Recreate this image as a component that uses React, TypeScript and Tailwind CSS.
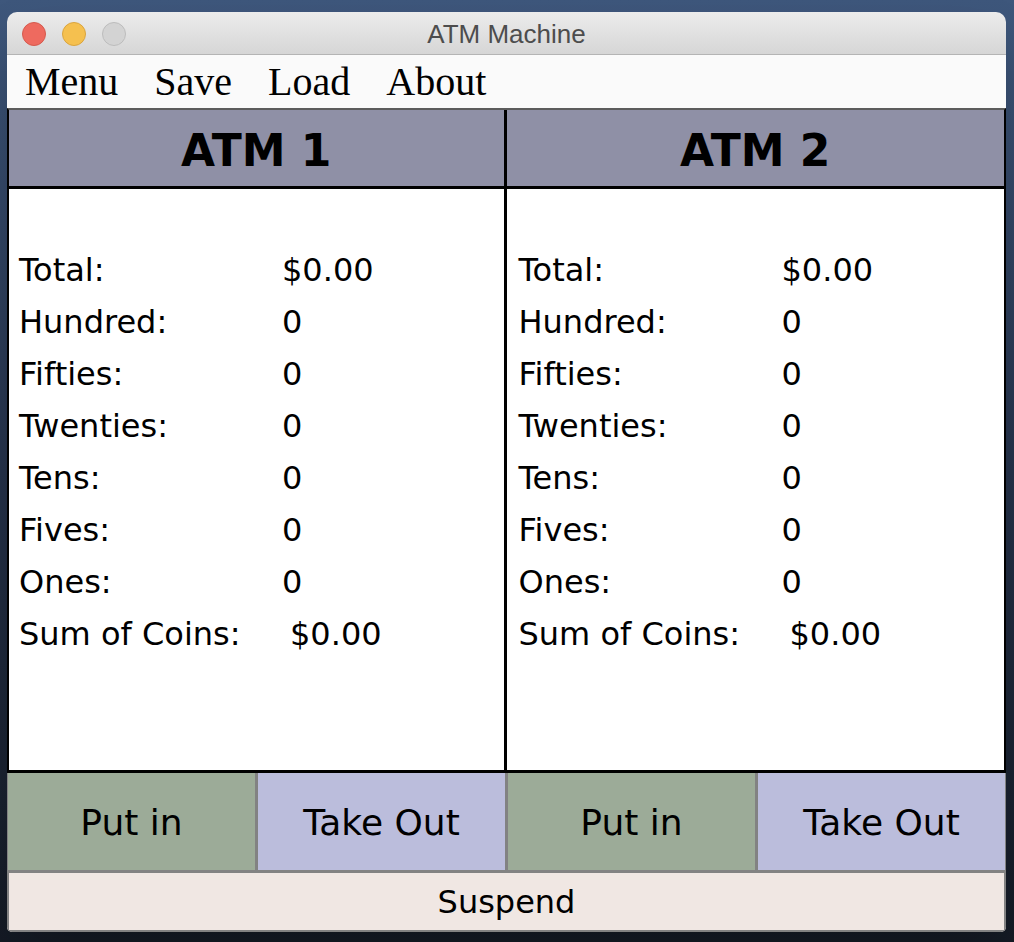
import React from 'react';

const rows: [string, string][] = [
  ['Total:', '$0.00'],
  ['Hundred:', '0'],
  ['Fifties:', '0'],
  ['Twenties:', '0'],
  ['Tens:', '0'],
  ['Fives:', '0'],
  ['Ones:', '0'],
  ['Sum of Coins:', '$0.00'],
];

const comic = "font-['Comic_Sans_MS','DejaVu_Sans',sans-serif]";

function AtmColumn({ title, inset }: { title: string; inset: string }) {
  return (
    <div className="flex flex-col">
      <div className="flex h-[79px] items-center justify-center border-b-[3px] border-black bg-[#8f90a6] pt-[6px]">
        <span className={`${comic} text-[44px] font-bold text-black`}>{title}</span>
      </div>
      <div className={`h-[581px] bg-white pt-[55px] ${inset}`}>
        {rows.map(([label, value]) => (
          <div key={label} className={`${comic} flex h-[52px] items-center text-[32px] text-black`}>
            <span className="w-[263px]">{label}</span>
            <span className={label === 'Sum of Coins:' ? 'pl-[8px]' : ''}>{value}</span>
          </div>
        ))}
      </div>
    </div>
  );
}

export default function App() {
  return (
    <div className="h-[942px] w-[1014px] overflow-hidden bg-gradient-to-b from-[#3e577c] via-[#25324a] to-[#141a24] pl-[7px] pt-[12px]">
      <div className="flex h-[920px] w-[999px] flex-col overflow-hidden rounded-t-[10px] rounded-b-[5px] shadow-2xl">
        {/* Title bar */}
        <div className="relative flex h-[43px] items-center justify-center border-b border-[#b4b4b4] bg-gradient-to-b from-[#ececec] to-[#d6d6d6] pt-[3px]">
          <div className="absolute left-[15px] top-[10px] flex gap-[16px]">
            <span className="h-[24px] w-[24px] rounded-full border border-[#d45a4e] bg-[#ee6a5f]" />
            <span className="h-[24px] w-[24px] rounded-full border border-[#d9a43f] bg-[#f5c04f]" />
            <span className="h-[24px] w-[24px] rounded-full border border-[#bcbcbc] bg-[#d3d3d3]" />
          </div>
          <span className="font-['Liberation_Sans',sans-serif] text-[26px] text-[#4d4d4d]">ATM Machine</span>
        </div>

        {/* Menu bar */}
        <div className="flex h-[53px] items-center gap-[36px] bg-[#fafafa] pl-[18px] font-['Liberation_Serif',serif] text-[40px] text-black">
          <span>Menu</span>
          <span>Save</span>
          <span>Load</span>
          <span>About</span>
        </div>

        {/* ATM panels */}
        <div className="grid grid-cols-2 divide-x-[3px] divide-black border-x-2 border-t-2 border-b-[3px] border-x-black border-t-[#5c5c5c] border-b-black">
          <AtmColumn title="ATM 1" inset="pl-[10px]" />
          <AtmColumn title="ATM 2" inset="pl-[12px]" />
        </div>

        {/* Buttons */}
        <div className={`${comic} grid h-[100px] grid-cols-4 gap-[3px] border-b-[3px] border-[#828282] bg-[#828282] px-[1px] text-[36px] text-black`}>
          <button className="bg-[#9cab98] pt-[3px]">Put in</button>
          <button className="bg-[#bbbddc] pt-[3px]">Take Out</button>
          <button className="bg-[#9cab98] pt-[3px]">Put in</button>
          <button className="bg-[#bbbddc] pt-[3px]">Take Out</button>
        </div>

        <button
          className={`${comic} flex flex-1 items-center justify-center border-x-2 border-b-2 border-[#828282] bg-[#f0e7e3] text-[32px] text-black`}
        >
          Suspend
        </button>
      </div>
    </div>
  );
}
